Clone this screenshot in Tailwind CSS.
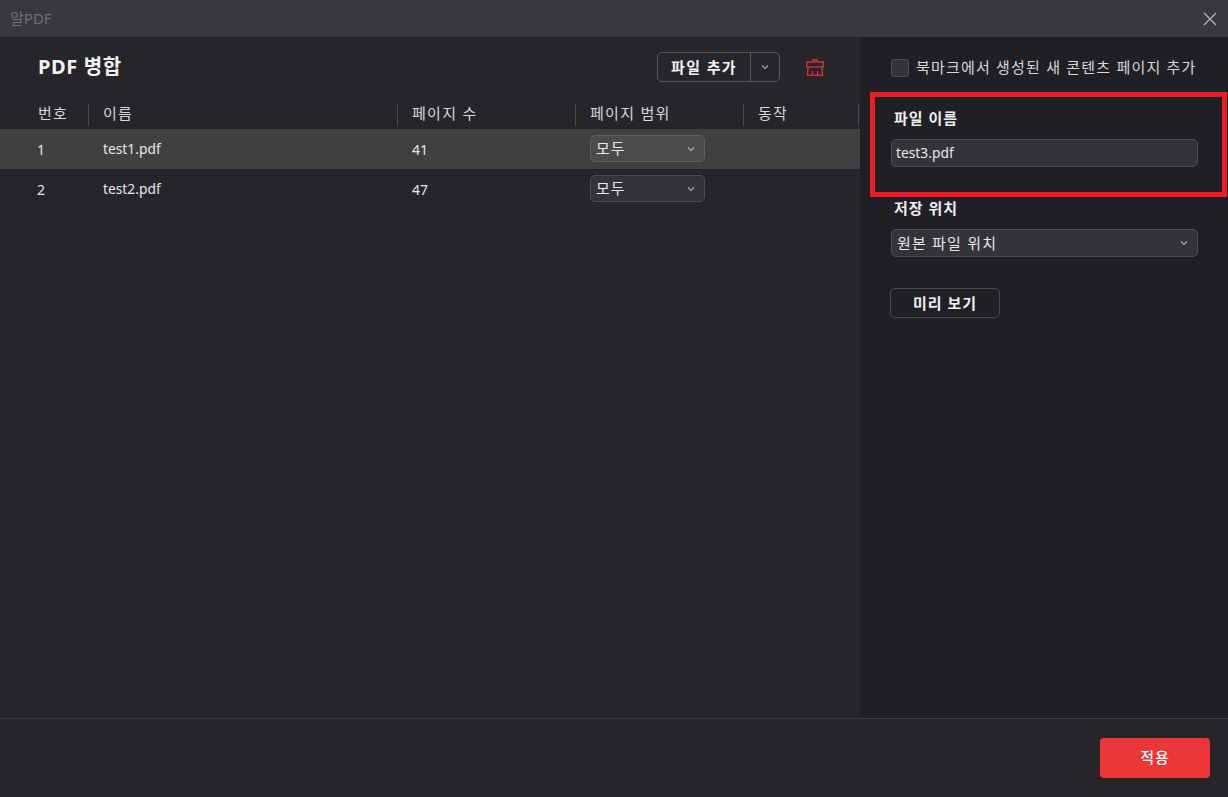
<!DOCTYPE html>
<html lang="ko">
<head>
<meta charset="utf-8">
<title>알PDF</title>
<script src="https://cdn.jsdelivr.net/npm/@tailwindcss/browser@4"></script>
</head>
<body class="m-0 overflow-hidden bg-[#25252a] font-['Noto_Sans','Noto_Sans_CJK_KR',sans-serif] text-[14px] text-[#e8e8ea]">
  <div class="relative flex h-[797px] w-[1228px] flex-col">
    <!-- title bar -->
    <div class="flex h-[37px] items-center justify-between bg-[#38383f] pl-[10px] pr-[10px]">
      <span class="text-[15px] text-[#6e6e74]">알PDF</span>
      <svg class="h-[16px] w-[16px]" viewBox="0 0 16 16" fill="none" stroke="#b4b4b8" stroke-width="1.3"><path d="M2 2l12 12M14 2L2 14"/></svg>
    </div>

    <div class="flex h-[681px]">
      <!-- file list -->
      <div class="w-[860px] bg-[#25252a]">
        <div class="flex h-[63px] items-center justify-between pb-[3px] pl-[38px] pr-[36px]">
          <h1 class="text-[20px] font-bold tracking-[0.6px] text-[#f2f2f4]">PDF 병합</h1>
          <div class="flex items-center">
            <div class="flex h-[30px] w-[123px] rounded-[5px] border border-[#56565c]">
              <button class="flex-1 border-r border-[#56565c] text-[15px] font-bold tracking-[1.4px] text-[#f2f2f4]">파일 추가</button>
              <span class="flex w-[28px] items-center justify-center">
                <svg class="h-[8px] w-[8px]" viewBox="0 0 8 8" fill="none" stroke="#a8a8ac" stroke-width="1.2"><path d="M1 2.5l3 3 3-3"/></svg>
              </span>
            </div>
            <svg class="ml-[26px] h-[17px] w-[18px]" viewBox="0 0 18 17" fill="none" stroke="#c93232" stroke-width="1.5"><path d="M7 3V.75h4V3M.75 3h16.5v5H.75zM2 8l-.5 8.25h15L16 8M6.5 16.25V12M11.5 16.25V12"/></svg>
          </div>
        </div>

        <div class="grid h-[29px] grid-cols-[89px_309px_178px_168px_115px] items-center text-[15px] tracking-[1.3px] text-[#d8d8da]">
          <div class="flex h-[22px] items-center border-r border-[#47474c] pb-[3px] pl-[38px]">번호</div>
          <div class="flex h-[22px] items-center border-r border-[#47474c] pb-[3px] pl-[14px]">이름</div>
          <div class="flex h-[22px] items-center border-r border-[#47474c] pb-[3px] pl-[14px]">페이지 수</div>
          <div class="flex h-[22px] items-center border-r border-[#47474c] pb-[3px] pl-[14px]">페이지 범위</div>
          <div class="flex h-[22px] items-center border-r border-[#47474c] pb-[3px] pl-[14px]">동작</div>
        </div>

        <div class="grid h-[40px] grid-cols-[89px_309px_178px_284px] items-center bg-[#404040]">
          <div class="pl-[37px]">1</div>
          <div class="pl-[14px] text-[13.8px]">test1.pdf</div>
          <div class="pl-[14px]">41</div>
          <div class="pl-[14px]">
            <div class="mb-[1px] flex h-[27px] w-[115px] items-center justify-between rounded-[5px] border border-[#5f5f62] bg-[#4c4c4e] pl-[5px] pr-[9px]">
              <span class="text-[15px] tracking-[1px]">모두</span>
              <svg class="h-[8px] w-[8px]" viewBox="0 0 8 8" fill="none" stroke="#b0b0b2" stroke-width="1.2"><path d="M1 2.5l3 3 3-3"/></svg>
            </div>
          </div>
        </div>
        <div class="grid h-[40px] grid-cols-[89px_309px_178px_284px] items-center">
          <div class="pl-[37px]">2</div>
          <div class="pl-[14px] text-[13.8px]">test2.pdf</div>
          <div class="pl-[14px]">47</div>
          <div class="pl-[14px]">
            <div class="mb-[1px] flex h-[27px] w-[115px] items-center justify-between rounded-[5px] border border-[#4c4c52] bg-[#333338] pl-[5px] pr-[9px]">
              <span class="text-[15px] tracking-[1px]">모두</span>
              <svg class="h-[8px] w-[8px]" viewBox="0 0 8 8" fill="none" stroke="#a8a8ac" stroke-width="1.2"><path d="M1 2.5l3 3 3-3"/></svg>
            </div>
          </div>
        </div>
      </div>

      <!-- output options -->
      <div class="flex-1 bg-[#202024] pl-[31px] pr-[30px]">
        <label class="flex h-[61px] items-center gap-[7px] text-[15px] tracking-[1.2px] text-[#d8d8da]">
          <span class="h-[18px] w-[18px] rounded-[3px] border border-[#4c4c52] bg-[#333338]"></span>
          북마크에서 생성된 새 콘텐츠 페이지 추가
        </label>
        <div class="mt-[10px] pl-[3px] text-[15px] font-bold leading-[20px] tracking-[1px] text-[#eeeef0]">파일 이름</div>
        <div class="mt-[11px] flex h-[28px] items-center rounded-[5px] border border-[#4c4c52] bg-[#333338] pl-[4px] text-[13.8px] text-[#e8e8ea]">test3.pdf</div>
        <div class="mt-[31px] pl-[3px] text-[15px] font-bold leading-[20px] tracking-[1px] text-[#eeeef0]">저장 위치</div>
        <div class="mt-[11px] flex h-[28px] items-center justify-between rounded-[5px] border border-[#4c4c52] bg-[#333338] pl-[5px] pr-[9px] text-[15px] tracking-[1.2px]">
          <span>원본 파일 위치</span>
          <svg class="h-[8px] w-[8px]" viewBox="0 0 8 8" fill="none" stroke="#a8a8ac" stroke-width="1.2"><path d="M1 2.5l3 3 3-3"/></svg>
        </div>
        <button class="mt-[31px] -ml-[1px] h-[30px] w-[110px] rounded-[5px] border border-[#47474c] text-[15px] font-bold tracking-[1px] text-[#f2f2f4]">미리 보기</button>
      </div>
    </div>

    <!-- footer -->
    <div class="flex h-[79px] items-center justify-end border-t border-[#3a3a3e] bg-[#25252a] pb-[1px] pr-[18px]">
      <button class="h-[40px] w-[110px] rounded-[4px] bg-[#ec3535] text-[15px] font-medium tracking-[1px] text-white">적용</button>
    </div>

    <!-- annotation box around the file name field -->
    <div class="absolute left-[870px] top-[92px] h-[105px] w-[357px] border-[5px] border-[#ed1c24]"></div>
  </div>
</body>
</html>
